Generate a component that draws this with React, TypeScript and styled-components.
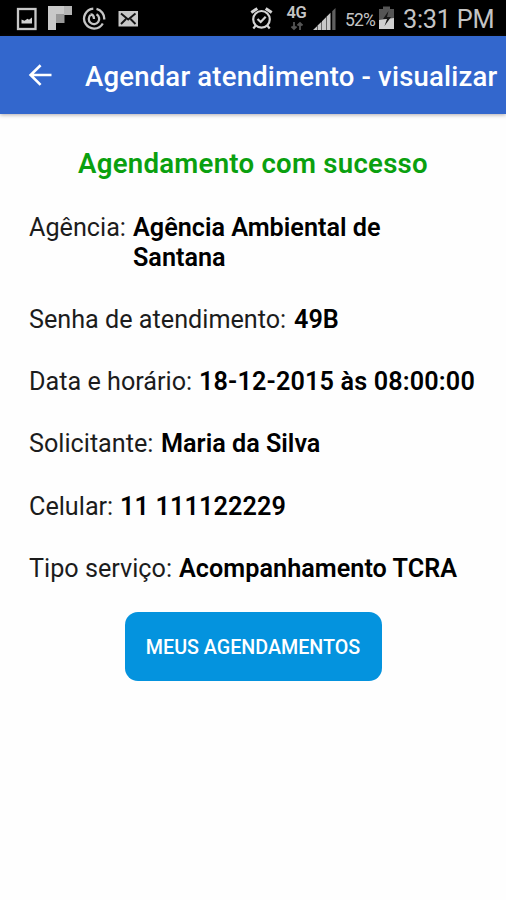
import React from 'react';
import styled, { createGlobalStyle } from 'styled-components';

const GlobalStyle = createGlobalStyle`
  * { box-sizing: border-box; }
  html, body { margin: 0; background: #fefefe; }
  body { font-family: Roboto, "Liberation Sans", sans-serif; color: #000; }
`;

const Screen = styled.div`
  display: flex;
  flex-direction: column;
  width: 506px;
  height: 900px;
  overflow: hidden;
  background: #fefefe;
`;

const StatusBar = styled.header`
  display: flex;
  flex: none;
  justify-content: space-between;
  height: 36px;
  padding: 0 12px 0 16px;
  background: #000;
  color: #c4c4c4;
`;

const StatusGroup = styled.div`
  display: flex;
  height: 36px;
`;

const StatusIcon = styled.svg<{ $gap?: number }>`
  flex: none;
  display: block;
  margin-left: ${({ $gap = 0 }) => $gap}px;
`;

const Network = styled.div`
  display: flex;
  flex-direction: column;
  align-items: center;
  width: 21px;
  margin-left: 13px;
  padding-top: 4px;
`;

const NetworkName = styled.span`
  font-size: 16.5px;
  font-weight: 600;
  line-height: 17px;
  letter-spacing: -0.3px;
`;

const Percent = styled.span`
  width: 31px;
  margin-left: 8px;
  font-size: 17.5px;
  line-height: 40px;
  letter-spacing: -0.8px;
  white-space: nowrap;
`;

const Clock = styled.span`
  width: 91px;
  margin-left: 8px;
  font-size: 25.3px;
  line-height: 40px;
  letter-spacing: -0.25px;
  white-space: nowrap;
`;

const AppBar = styled.nav`
  display: flex;
  flex: none;
  align-items: center;
  height: 78px;
  padding-left: 28px;
  background: #3367cd;
  color: #fff;
  box-shadow: 0 1px 4px rgba(60, 45, 50, 0.4);
`;

const BackButton = styled.button`
  width: 24px;
  height: 24px;
  margin: 0 33px 0 0;
  padding: 0;
  border: 0;
  background: none;
  color: inherit;
`;

const Title = styled.h1`
  margin: 3px 0 0;
  font-size: 27.5px;
  font-weight: 500;
  line-height: 32px;
  letter-spacing: 0.2px;
  white-space: nowrap;
`;

const Content = styled.main`
  display: flex;
  flex-direction: column;
  align-items: center;
  padding-top: 34px;
`;

const Success = styled.h2`
  margin: 0;
  font-size: 27.6px;
  font-weight: 600;
  line-height: 32px;
  letter-spacing: 0.25px;
  color: #0aa00f;
  white-space: nowrap;
`;

const Details = styled.dl`
  display: flex;
  flex-direction: column;
  align-self: stretch;
  gap: 32.8px;
  margin: 33px 0 0;
  padding-left: 29px;
  font-size: 25.2px;
  line-height: 29.5px;
`;

const Row = styled.div`
  display: flex;
`;

const Label = styled.dt<{ $width: number }>`
  flex: none;
  width: ${({ $width }) => $width}px;
  color: #1c1c1c;
  font-weight: 400;
  white-space: nowrap;
`;

const Value = styled.dd<{ $spacing?: number }>`
  margin: 0;
  max-width: 330px;
  font-weight: 600;
  letter-spacing: ${({ $spacing = 0 }) => $spacing}px;
  white-space: pre-line;
`;

const Action = styled.button`
  width: 257px;
  height: 69px;
  margin-top: 28.5px;
  padding: 3px 0 0;
  border: 0;
  border-radius: 13px;
  background: #0493de;
  color: #fff;
  font-family: inherit;
  font-size: 19.7px;
  font-weight: 500;
  white-space: nowrap;
`;

const details = [
  { label: 'Agência:', value: 'Agência Ambiental de\nSantana', width: 104 },
  { label: 'Senha de atendimento:', value: '49B', width: 265 },
  { label: 'Data e horário:', value: '18-12-2015 às 08:00:00', width: 170, spacing: 0.15 },
  { label: 'Solicitante:', value: 'Maria da Silva', width: 132 },
  { label: 'Celular:', value: '11 111122229', width: 91, spacing: 0.12 },
  { label: 'Tipo serviço:', value: 'Acompanhamento TCRA', width: 150, spacing: 0.04 },
];

export default function App() {
  return (
    <>
      <GlobalStyle />
      <Screen>
        <StatusBar>
          <StatusGroup>
            <StatusIcon width="22" height="36" viewBox="0 0 22 36">
              <rect x="2" y="9" width="17.5" height="20" fill="none" stroke="#c8c8c8" strokeWidth="2.3" />
              <path d="M5.500 23.500v-4l3 1.200 3-2 1.500 1 3-2.200v6z" fill="#d2d2d2" />
            </StatusIcon>
            <StatusIcon width="26" height="36" viewBox="0 0 26 36" $gap={9}>
              <path d="M1 6h24v9H9v15H1z" fill="#c9c9c9" />
              <path d="M9 14h8.500v9H9z" fill="#999" />
              <path d="M17 6h8v9h-8z" fill="#b4b4b4" />
            </StatusIcon>
            <StatusIcon width="24" height="36" viewBox="0 0 24 36" $gap={9}>
              <g fill="none" stroke="#c5c5c5" strokeWidth="2.300">
                <path d="M14.500 8.900A10 10 0 0 1 22.200 19.500M20.800 23.500A10 10 0 1 1 11.300 8.600" />
                <path d="M14.500 14.300a5.200 5.200 0 1 1-6 .7M8.500 14.500c2.300 0 3.500 1.300 3.500 4.500" strokeWidth="2.300" />
              </g>
            </StatusIcon>
            <StatusIcon width="22" height="36" viewBox="0 0 22 36" $gap={12}>
              <rect x="0.500" y="11" width="19.500" height="15.500" fill="#c8c8c8" />
              <path d="M3 13.500l7.200 6 7.300-6M3 24l5-5M17.500 24l-5-5" fill="none" stroke="#151515" strokeWidth="1.900" />
            </StatusIcon>
          </StatusGroup>
          <StatusGroup>
            <StatusIcon width="23" height="36" viewBox="0 0 23 36">
              <g fill="none" stroke="#d4d4d4" strokeWidth="2.200">
                <circle cx="11.500" cy="19.300" r="8.300" />
                <path d="M7.500 19l3.200 3 5-5.300M5.800 25.500l-2.500 3M17.200 25.500l2.500 3" />
                <path d="M1.300 12.500l6-4M21.700 12.500l-6-4" strokeWidth="3" />
              </g>
            </StatusIcon>
            <Network>
              <NetworkName>4G</NetworkName>
              <svg width="14" height="10" viewBox="0 0 14 10">
                <path d="M4 1v7M1.500 5.500L4 8l2.500-2.500M10 9V2M7.500 4.500L10 2l2.500 2.500" fill="none" stroke="#555" strokeWidth="1.800" />
              </svg>
            </Network>
            <StatusIcon width="24" height="36" viewBox="0 0 24 36" $gap={6}>
              <path d="M0 30l4-3.700V30zM4.500 30v-4.400l4-3.900V30zM9 30v-8.800l4-3.900V30zM13.500 30V16.800l4-4.100V30z" fill="#c9c9c9" />
              <path d="M19.200 30V11.300L22.500 8v22z" fill="#606060" />
            </StatusIcon>
            <Percent>52%</Percent>
            <StatusIcon width="16" height="36" viewBox="0 0 16 36" $gap={3}>
              <path d="M0 9h4V6.500h7V9h4v20H0z" fill="#555" />
              <path d="M0 20l15-2v11H0z" fill="#d0d0d0" />
              <path d="M9.500 11L4 19h4l-2.500 7 6.500-9H8z" fill="#181818" />
            </StatusIcon>
            <Clock>3:31 PM</Clock>
          </StatusGroup>
        </StatusBar>
        <AppBar>
          <BackButton aria-label="Voltar">
            <svg width="24" height="24" viewBox="0 0 24 24" fill="none" stroke="currentColor" strokeWidth="2.600">
              <path d="M23.500 12H2.500M12.600 2.200L2.600 12l10 9.900" />
            </svg>
          </BackButton>
          <Title>Agendar atendimento - visualizar</Title>
        </AppBar>
        <Content>
          <Success>Agendamento com sucesso</Success>
          <Details>
            {details.map(({ label, value, width, spacing }) => (
              <Row key={label}>
                <Label $width={width}>{label}</Label>
                <Value $spacing={spacing}>{value}</Value>
              </Row>
            ))}
          </Details>
          <Action>MEUS AGENDAMENTOS</Action>
        </Content>
      </Screen>
    </>
  );
}
